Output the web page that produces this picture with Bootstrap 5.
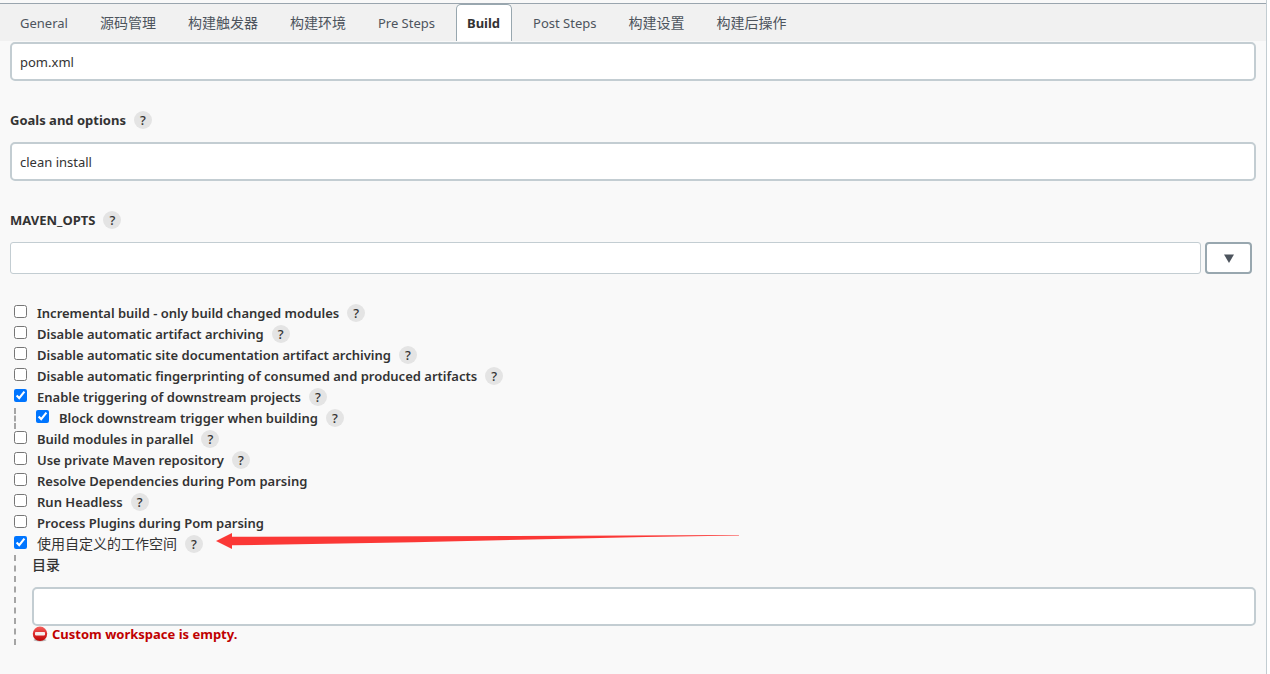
<!DOCTYPE html>
<html lang="zh-CN">
<head>
<meta charset="utf-8">
<meta name="viewport" content="width=device-width, initial-scale=1">
<title>Build</title>
<link href="https://cdn.jsdelivr.net/npm/bootstrap@5.3.0/dist/css/bootstrap.min.css" rel="stylesheet">
<style>
  body { font-family: "Noto Sans", "Noto Sans CJK SC", sans-serif; font-size: 13px; line-height: 21px; color: #333; background: #fff; }
  .config-panel { margin-right: 3px; padding-top: 3px; background: #f9f9f9; border-right: 1px solid #c3cdd2; }
  .config-tabs { height: 38px; padding-left: 9px; gap: 10px; background: #f1f1f1; border-top: 1px solid #9aa5ae; }
  .config-tabs .nav-link { height: 37px; padding: 8px 10px; border: 1px solid transparent; border-bottom: 0; border-radius: 5px 5px 0 0; color: #4d545d; font-weight: 400; line-height: 21px; font-size: 13px; }
  .config-tabs .cjk-tab { padding-top: 7px; font-size: 14px; }
  .config-tabs .nav-link.active { padding-right: 11px; background: #fff; border-color: #98a7af; color: #333; font-weight: 700; }
  .config-form { padding: 1px 10px 29px; }
  .config-form .form-control { height: 39px; padding: 0 8px; border: 2px solid #c3cdd2; border-radius: 5px; font-size: 13px; color: #333; }
  .config-form .slim-input { height: 32px; border-width: 1px; border-radius: 3px; }
  .expand-btn { width: 47px; height: 32px; padding: 0; background: #fff; border: 2px solid #98a7af; border-radius: 4px; }
  .field-name { font-weight: 700; }
  .field-head { height: 21px; margin: 29px 0 11px; }
  .help-btn { align-self: flex-start; width: 18px; height: 18px; margin-top: 1px; padding: 0; border: 0; border-radius: 50%; background: #e4e4e4; color: #333; font-size: 13px; font-weight: 500; line-height: 18px; }
  .option-list { margin-top: 29px; }
  .option-row { height: 21px; padding-left: 4px; font-weight: 600; }
  .option-row input { width: 13px; height: 13px; margin: 2px 10px 0 0; align-self: flex-start; }
  .option-row .cjk-text { font-size: 14px; font-weight: 400; line-height: 19px; align-self: flex-start; }
  .dash-group { margin-left: 4px; border-left: 2px dashed #a5a5a5; }
  .trigger-group, .workspace-group { padding-left: 16px; }
  .error-line { height: 19px; line-height: 17px; color: #c00000; font-weight: 700; }
  .dir-label { margin-bottom: 13px; font-size: 14px; line-height: 19px; font-weight: 500; }
</style>
</head>
<body>
<main class="config-panel min-vh-100">
  <nav class="nav config-tabs flex-nowrap">
    <a class="nav-link" href="#">General</a>
    <a class="nav-link cjk-tab" href="#">源码管理</a>
    <a class="nav-link cjk-tab" href="#">构建触发器</a>
    <a class="nav-link cjk-tab" href="#">构建环境</a>
    <a class="nav-link" href="#">Pre Steps</a>
    <a class="nav-link active" aria-current="page" href="#">Build</a>
    <a class="nav-link" href="#">Post Steps</a>
    <a class="nav-link cjk-tab" href="#">构建设置</a>
    <a class="nav-link cjk-tab" href="#">构建后操作</a>
  </nav>
  <form class="config-form">
    <input class="form-control" type="text" value="pom.xml" aria-label="Root POM">

    <div class="field-head d-flex align-items-center gap-2">
      <label class="field-name" for="goals">Goals and options</label>
      <button class="help-btn" type="button">?</button>
    </div>
    <input class="form-control" type="text" id="goals" value="clean install">

    <div class="field-head d-flex align-items-center gap-2">
      <label class="field-name" for="opts">MAVEN_OPTS</label>
      <button class="help-btn" type="button">?</button>
    </div>
    <div class="d-flex gap-1 pe-1">
      <input class="form-control slim-input" type="text" id="opts">
      <button class="expand-btn flex-shrink-0" type="button" aria-label="Expand">
        <svg class="d-block mx-auto" width="10" height="9" viewBox="0 0 10 9"><path d="M0 .5h10L5 9z" fill="#4d545d"/></svg>
      </button>
    </div>

    <div class="option-list">
      <div class="option-row d-flex align-items-center"><input type="checkbox" id="o1"><label for="o1">Incremental build - only build changed modules</label><button class="help-btn ms-2" type="button">?</button></div>
      <div class="option-row d-flex align-items-center"><input type="checkbox" id="o2"><label for="o2">Disable automatic artifact archiving</label><button class="help-btn ms-2" type="button">?</button></div>
      <div class="option-row d-flex align-items-center"><input type="checkbox" id="o3"><label for="o3">Disable automatic site documentation artifact archiving</label><button class="help-btn ms-2" type="button">?</button></div>
      <div class="option-row d-flex align-items-center"><input type="checkbox" id="o4"><label for="o4">Disable automatic fingerprinting of consumed and produced artifacts</label><button class="help-btn ms-2" type="button">?</button></div>
      <div class="option-row d-flex align-items-center"><input type="checkbox" id="o5" checked><label for="o5">Enable triggering of downstream projects</label><button class="help-btn ms-2" type="button">?</button></div>
      <div class="dash-group trigger-group">
        <div class="option-row d-flex align-items-center"><input type="checkbox" id="o6" checked><label for="o6">Block downstream trigger when building</label><button class="help-btn ms-2" type="button">?</button></div>
      </div>
      <div class="option-row d-flex align-items-center"><input type="checkbox" id="o7"><label for="o7">Build modules in parallel</label><button class="help-btn ms-2" type="button">?</button></div>
      <div class="option-row d-flex align-items-center"><input type="checkbox" id="o8"><label for="o8">Use private Maven repository</label><button class="help-btn ms-2" type="button">?</button></div>
      <div class="option-row d-flex align-items-center"><input type="checkbox" id="o9"><label for="o9">Resolve Dependencies during Pom parsing</label></div>
      <div class="option-row d-flex align-items-center"><input type="checkbox" id="o10"><label for="o10">Run Headless</label><button class="help-btn ms-2" type="button">?</button></div>
      <div class="option-row d-flex align-items-center"><input type="checkbox" id="o11"><label for="o11">Process Plugins during Pom parsing</label></div>
      <div class="option-row d-flex align-items-center"><input type="checkbox" id="o12" checked><label class="cjk-text" for="o12">使用自定义的工作空间</label><button class="help-btn ms-2 me-3" type="button">?</button>
        <svg class="overflow-visible" width="520" height="21" viewBox="3 0 520 21" aria-hidden="true"><path d="M0 7 16-1V2.800L300 2.100 523 1V1.600L430 2.900 198 8.300 16 11.300V15z" fill="#fb3836"/></svg>
      </div>
      <div class="dash-group workspace-group">
        <label class="dir-label d-block" for="dir">目录</label>
        <input class="form-control" type="text" id="dir">
        <div class="error-line d-flex">
          <svg class="me-1 flex-shrink-0" width="16" height="16" viewBox="0 0 16 16" aria-hidden="true">
            <defs><linearGradient id="stop" x2="0" y2="1"><stop stop-color="#f4605c"/><stop offset=".5" stop-color="#dd2b2b"/><stop offset="1" stop-color="#bd0505"/></linearGradient></defs>
            <ellipse cx="8" cy="14" rx="6.500" ry="1.500" fill="#bbb"/>
            <circle cx="8" cy="7.800" r="7.200" fill="url(#stop)"/>
            <rect x="3" y="6" width="10" height="3.400" rx=".8" fill="#f6eeee"/>
          </svg>
          <span>Custom workspace is empty.</span>
        </div>
      </div>
    </div>
  </form>
</main>
<script src="https://cdn.jsdelivr.net/npm/bootstrap@5.3.0/dist/js/bootstrap.bundle.min.js"></script>
</body>
</html>
